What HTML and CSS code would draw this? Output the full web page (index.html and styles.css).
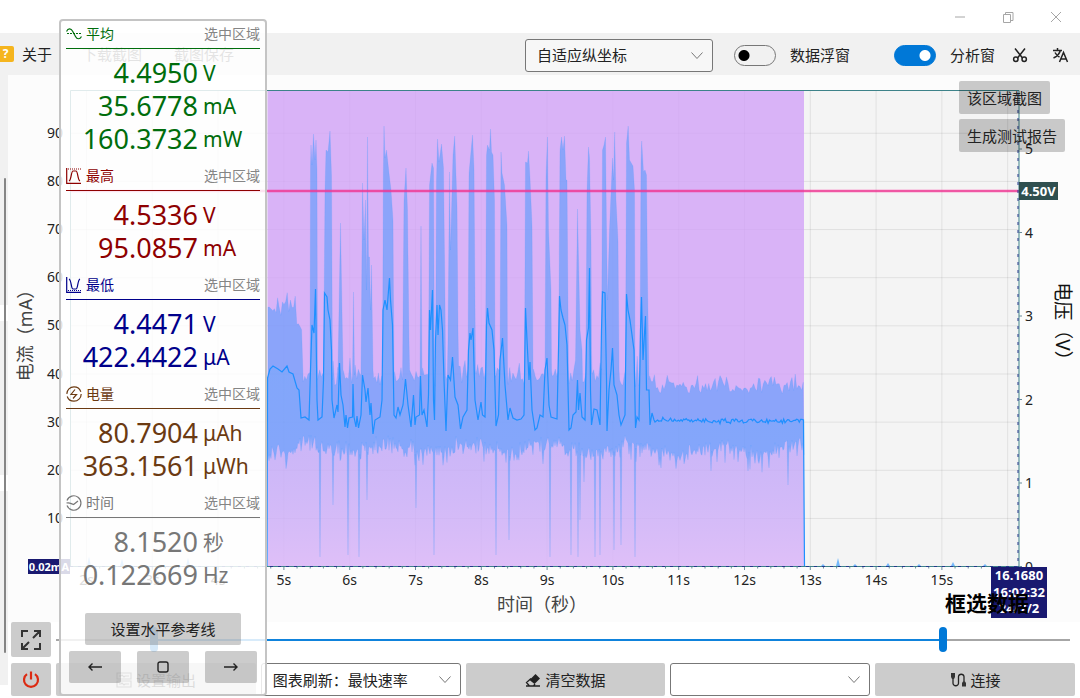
FILE: index.html
```html
<!DOCTYPE html>
<html lang="zh-CN">
<head>
<meta charset="utf-8">
<meta name="viewport" content="width=device-width, initial-scale=1">
<title>框选数据</title>
<link rel="stylesheet" href="styles.css">
</head>
<body>
<div class="app">
  <header class="titlebar">
    <button class="win-btn" aria-label="最小化"><svg width="12" height="12" viewBox="0 0 12 12"><path d="M1 6h10"/></svg></button>
    <button class="win-btn" aria-label="还原"><svg width="12" height="12" viewBox="0 0 12 12"><path d="M1.500 3.500h7v8h-7zM3.500 3.500v-2h7.500v8H8.500"/></svg></button>
    <button class="win-btn" aria-label="关闭"><svg width="12" height="12" viewBox="0 0 12 12"><path d="M1 1l10 10M11 1L1 11"/></svg></button>
  </header>

  <nav class="toolbar">
    <div class="menu">
      <span class="help-badge">?</span>
      <button class="menu-item">关于</button>
      <button class="menu-item menu-capture">下载截图</button>
      <button class="menu-item menu-save">截图保存</button>
    </div>
    <div class="tools">
      <div class="select-box select-axis">
        <select aria-label="纵坐标模式"><option>自适应纵坐标</option></select>
        <svg class="chevron" width="14" height="9" viewBox="0 0 14 9"><path d="M1.500 1.500L7 7.500l5.500-6"/></svg>
      </div>
      <label class="switch switch-data"><input type="checkbox"><span>数据浮窗</span></label>
      <label class="switch switch-analysis"><input type="checkbox" checked><span>分析窗</span></label>
      <button class="icon-btn icon-cut" aria-label="截取">
        <svg width="16" height="16" viewBox="0 0 16 16"><path d="M3 1.500l7.500 9.500M13 1.500L5.500 11"/><circle cx="3.800" cy="12.300" r="2.200"/><circle cx="12.200" cy="12.300" r="2.200"/></svg>
      </button>
      <button class="icon-btn" aria-label="语言">
        <svg width="17" height="16" viewBox="0 0 17 16"><path d="M1 3.500h9M5.500 1v2.500M8.300 3.500C7.500 7 5 9.500 1.500 11M3 5.500C4 7.500 5.500 9 7.500 10M7.500 15l4-9.500 4 9.500M9 12h5"/></svg>
      </button>
    </div>
  </nav>

  <main class="workspace">
    <aside class="side-rail"><div class="side-thumb"></div></aside>
    <div class="content">
      <section class="chart">
        <svg id="plot" class="plot" viewBox="8 75 1072 547" role="img" aria-label="电流与电压波形"></svg>
        <div class="chart-actions">
          <button class="btn chart-btn">该区域截图</button>
          <button class="btn chart-btn">生成测试报告</button>
        </div>
      </section>

      <footer class="controls">
        <button class="btn square" aria-label="全屏">
          <svg width="22" height="22" viewBox="0 0 22 22" class="stroke-icon"><path d="M2 8V2h6M20 14v6h-6M13 9l7-7M14 2h6v6M9 13l-7 7M2 14v6h6"/></svg>
        </button>
        <div class="range" style="--from:9.700%;--to:87.500%">
          <input type="range" min="0" max="1000" value="93" aria-label="起始时间">
          <input type="range" min="0" max="1000" value="878" aria-label="结束时间">
        </div>
        <button class="btn square power" aria-label="电源">
          <svg width="20" height="20" viewBox="0 0 20 20"><path d="M10 1.500v8M6 4.200a7 7 0 1 0 8 0"/></svg>
        </button>
        <div class="actions">
          <button class="btn">
            <svg width="16" height="16" viewBox="0 0 16 16" class="thin-icon"><path d="M1 1h14v6H1zM1 9h14v6H1zM3 4h2l1-1 2 2 1-1h4M3 12h2l1-1 2 2 1-1h4"/></svg>
            设置输出
          </button>
          <div class="select-box">
            <select aria-label="图表刷新"><option>图表刷新：最快速率</option></select>
            <svg class="chevron" width="14" height="9" viewBox="0 0 14 9"><path d="M1.500 1.500L7 7.500l5.500-6"/></svg>
          </div>
          <button class="btn">
            <svg width="16" height="16" viewBox="0 0 16 16"><path d="M6 6.500L10.500 2 15 6.500 9.500 12 4.500 8z" fill="#222"/><path d="M6 6.500l-4.500 4 3 3.500h4l1.500-2M1 14h14" fill="none" stroke="#222" stroke-width="1.300"/></svg>
            清空数据
          </button>
          <div class="select-box">
            <select aria-label="端口"><option></option></select>
            <svg class="chevron" width="14" height="9" viewBox="0 0 14 9"><path d="M1.500 1.500L7 7.500l5.500-6"/></svg>
          </div>
          <button class="btn">
            <svg width="17" height="16" viewBox="0 0 17 16"><path d="M3 6v5.500a2.800 2.800 0 0 0 5.500 0v-7a2.800 2.800 0 0 1 5.500 0V10" fill="none" stroke="#222" stroke-width="1.300"/><path d="M1 1h4v4L4 7H2L1 5zM13 9.500h2l1 1.500v3.500h-4V11z" fill="#333"/></svg>
            连接
          </button>
        </div>
      </footer>
    </div>
  </main>

  <section class="panel" aria-label="分析窗">
    <div class="stat stat-avg">
      <h2 class="stat-head">
        <svg width="16" height="14" viewBox="0 0 16 14"><path d="M.5 4.500C2 1 5 1 6.500 4l3 5.500c1.500 3 4.500 3 6 0"/><path d="M1 6.500h14" stroke-dasharray="2 1"/></svg>
        <span>平均</span><small>选中区域</small>
      </h2>
      <p class="value"><b>4.4950</b><i>V</i></p>
      <p class="value"><b>35.6778</b><i>mA</i></p>
      <p class="value"><b>160.3732</b><i>mW</i></p>
    </div>
    <div class="stat stat-max">
      <h2 class="stat-head">
        <svg width="16" height="16" viewBox="0 0 16 16"><path d="M.7 0v15.300H15M3 13C5.500 12 5 3 7 3h3c2 0 1.500 9 4 10"/><path d="M2 1h13" stroke-dasharray="1 1"/></svg>
        <span>最高</span><small>选中区域</small>
      </h2>
      <p class="value"><b>4.5336</b><i>V</i></p>
      <p class="value"><b>95.0857</b><i>mA</i></p>
    </div>
    <div class="stat stat-min">
      <h2 class="stat-head">
        <svg width="16" height="16" viewBox="0 0 16 16"><path d="M.7 0v15.300H15M3 2c2.500 1 2 10 4 10h3c2 0 1.500-9 4-10"/><path d="M2 13.500h13" stroke-dasharray="1 1"/></svg>
        <span>最低</span><small>选中区域</small>
      </h2>
      <p class="value"><b>4.4471</b><i>V</i></p>
      <p class="value"><b>422.4422</b><i>μA</i></p>
    </div>
    <div class="stat stat-charge">
      <h2 class="stat-head">
        <svg width="16" height="16" viewBox="0 0 16 16"><circle cx="8" cy="8" r="7.200" stroke-dasharray="20 2.600"/><path d="M9 3.500L5 8.500h5.500L7 12.500"/></svg>
        <span>电量</span><small>选中区域</small>
      </h2>
      <p class="value"><b>80.7904</b><i>μAh</i></p>
      <p class="value"><b>363.1561</b><i>μWh</i></p>
    </div>
    <div class="stat stat-time">
      <h2 class="stat-head">
        <svg width="16" height="16" viewBox="0 0 16 16"><path d="M1 5.500A7.200 7.200 0 1 1 1 10.500M.5 8C4 7 5 9 7.500 9.500L12 6"/></svg>
        <span>时间</span><small>选中区域</small>
      </h2>
      <p class="value"><b>8.1520</b><i>秒</i></p>
      <p class="value"><b>0.122669</b><i>Hz</i></p>
    </div>
    <button class="btn ref-line">设置水平参考线</button>
    <div class="nudge">
      <button class="btn" aria-label="左移"><svg width="14" height="10" viewBox="0 0 14 10"><path d="M14 5H1M4.500 1.500L1 5l3.500 3.500"/></svg></button>
      <button class="btn" aria-label="停止"><svg width="12" height="12" viewBox="0 0 12 12"><rect x="1" y="1" width="10" height="10" rx="2"/></svg></button>
      <button class="btn" aria-label="右移"><svg width="14" height="10" viewBox="0 0 14 10"><path d="M0 5h13M9.500 1.500L13 5 9.500 8.500"/></svg></button>
    </div>
  </section>
</div>
<script src="chart.js"></script>
</body>
</html>
```

FILE: styles.css
```css
* { box-sizing: border-box; }

body {
  margin: 0;
  background: #fff;
  color: #222;
  font: 15px/20px "Noto Sans", "Open Sans", "Noto Sans CJK SC", sans-serif;
}

button, select, input { font: inherit; color: inherit; margin: 0; }

button { border: 0; background: none; padding: 0; white-space: nowrap; }

.app { position: relative; min-height: 100vh; }

/* window title bar */
.titlebar {
  display: flex;
  justify-content: flex-end;
  height: 33px;
  padding-right: 18px;
  gap: 36px;
}
.win-btn { width: 12px; display: flex; align-items: center; }
.win-btn svg { fill: none; stroke: #a6a6a6; stroke-width: 1; }

/* toolbar */
.toolbar {
  display: flex;
  align-items: center;
  justify-content: space-between;
  height: 42px;
  background: #f1f1f1;
}
.menu, .tools { display: flex; align-items: center; }
.help-badge {
  width: 14px;
  height: 16px;
  border-radius: 0 2px 2px 0;
  background: #f5b51e;
  color: #fff;
  font: bold 12px/16px "Open Sans", sans-serif;
  text-align: center;
  padding-right: 3px;
}
.menu-item { margin-left: 8px; }
.menu-capture { margin-left: 30px; }
.menu-save { margin-left: 32px; }
.menu-capture, .menu-save { color: #555; }
.tools { padding: 2px 11px 0 0; }

.select-box { display: grid; align-items: center; height: 33px; }
.select-box select {
  grid-area: 1 / 1;
  width: 100%;
  height: 33px;
  padding: 0 32px 0 11px;
  border: 1px solid #777;
  border-radius: 3px;
  background: #fff;
  appearance: none;
}
.select-box .chevron {
  grid-area: 1 / 1;
  justify-self: end;
  margin-right: 9px;
  pointer-events: none;
  fill: none;
  stroke: #777;
}
.select-axis { width: 188px; margin-right: 21px; }
.select-axis select { background: #f7f7f7; }

.switch { display: flex; align-items: center; gap: 14px; }
.switch input {
  width: 42px;
  height: 21px;
  border: 1px solid #777;
  border-radius: 11px;
  background: radial-gradient(circle at 9px 50%, #000 5px, transparent 6px);
  appearance: none;
}
.switch input:checked {
  border-color: #0078d7;
  background: radial-gradient(circle at 30px 50%, #fff 5px, transparent 6px) #0078d7;
}
.switch-data { margin-right: 44px; }

.icon-btn { display: flex; }
.icon-btn svg { fill: none; stroke: #222; stroke-width: 1.5; }
.icon-cut { margin: 0 24px 0 17px; }

/* workspace */
.workspace { display: grid; grid-template-columns: 8px minmax(0, 1fr); }
.side-rail {
  background: linear-gradient(#f1f1f1 230px, #fff 230px 246px, #f1f1f1 246px 400px, #fff 400px 416px, #f1f1f1 416px 610px, #fff 610px);
  padding: 103px 2px 0 4px;
}
.side-thumb { height: 475px; border-radius: 1px; background: #858585; }

.chart { position: relative; background: #fcfcfc; }
.plot { display: block; width: 100%; }
.plot text { font-family: "Noto Sans", "Open Sans", "Noto Sans CJK SC", sans-serif; fill: #222; }
.plot .tick { font-size: 14px; }
.plot .axis-title { font-size: 18px; fill: #444; text-anchor: middle; }
.plot .axis-volt { font-size: 19px; fill: #111; }
.plot .tag { font-size: 13px; font-weight: bold; fill: #fff; text-anchor: middle; }
.plot .tag-small { font-size: 11px; }
.plot .caption { font-size: 21px; font-weight: bold; fill: #000; }
.plot .grid { stroke: #000; stroke-opacity: .08; }
.plot .select-area { fill: #d2a3f8; fill-opacity: .8; }
.plot .envelope { fill: #1e90ff; fill-opacity: .41; stroke: #1e90ff; stroke-opacity: .12; }
.plot .mean { fill: none; stroke: #1e90ff; stroke-width: 1.2; }
.plot .volt-glow { stroke: #ff1493; stroke-opacity: .35; stroke-width: 3; }
.plot .volt { stroke: #ec3c93; stroke-width: 1.6; }
.plot .frame { stroke: #3d8289; fill: none; }
.plot .dash { stroke: #26388c; stroke-dasharray: 3 5; }
.plot .minor { stroke: #6a8d9b; }

.chart-actions {
  position: absolute;
  top: 6px;
  right: 15px;
  width: 106px;
  display: flex;
  flex-direction: column;
  align-items: flex-start;
  gap: 5px;
}

.btn {
  display: flex;
  align-items: center;
  justify-content: center;
  gap: 4px;
  height: 33px;
  border-radius: 2px;
  background: #ccc;
}
.chart-btn { padding: 0 8px; background: rgba(0, 0, 0, .2); }

/* bottom controls */
.controls {
  display: grid;
  grid-template-columns: 40px minmax(0, 1fr);
  grid-template-rows: 35px 33px;
  gap: 6px 5px;
  padding: 0 5px 2px 3px;
  background: #fff;
}
.square { height: auto; }
.stroke-icon { fill: none; stroke: #333; stroke-width: 2; }
.power svg { fill: none; stroke: #dc2a12; stroke-width: 2.2; }
.actions {
  display: grid;
  grid-template-columns: repeat(5, minmax(0, 1fr));
  gap: 5px;
}
.thin-icon { fill: none; stroke: #444; stroke-width: 1.2; }

.range {
  display: grid;
  align-items: center;
  margin-right: 5px;
  background: linear-gradient(90deg, #a6a6a6 var(--from), #0f83dc var(--from) var(--to), #a6a6a6 var(--to)) center / 100% 2px no-repeat;
}
.range input {
  grid-area: 1 / 1;
  width: 100%;
  height: 25px;
  background: none;
  appearance: none;
  pointer-events: none;
}
.range input::-webkit-slider-thumb {
  width: 8px;
  height: 25px;
  border-radius: 4px;
  background: #0078d7;
  appearance: none;
  pointer-events: auto;
}

/* floating analysis panel */
.panel {
  position: absolute;
  top: 19px;
  left: 59px;
  width: 208px;
  padding: 0 5px 11px;
  border: 2px solid #c4c4c4;
  border-radius: 4px;
  background: rgba(255, 255, 255, .84);
}
.stat { padding-bottom: 8px; }
.stat-head {
  display: flex;
  align-items: center;
  gap: 4px;
  height: 28px;
  margin: 0 0 7px;
  padding-bottom: 1px;
  border-bottom: 1px solid;
  font-size: 14px;
  font-weight: normal;
}
.stat-head svg { fill: none; stroke: currentColor; stroke-width: 1.2; }
.stat-head small { margin-left: auto; font-size: 14px; color: #858585; }
.value {
  display: grid;
  grid-template-columns: 132px 1fr;
  align-items: center;
  gap: 5px;
  height: 33px;
  margin: 0;
}
.value b { font-size: 27px; font-weight: normal; text-align: right; }
.value i { font-size: 21px; font-style: normal; white-space: nowrap; }
.stat-avg { color: #006d0c; }
.stat-max { color: #8e0000; }
.stat-min { color: #00008b; }
.stat-charge { color: #6b3a12; }
.stat-time { color: #777; }
.panel .btn { height: 32px; background: rgba(100, 100, 100, .33); }
.panel .ref-line { width: 156px; margin: 14px auto 6px; }
.nudge { display: flex; justify-content: space-between; padding: 0 3px; }
.nudge .btn { width: 52px; }
.nudge svg { fill: none; stroke: #222; stroke-width: 1.4; }
```

FILE: chart.js
```js
(function () {
  var svg = document.getElementById('plot');
  var LEFT = 70, RIGHT = 1019, TOP = 90, BOTTOM = 567;

  // repeatable pseudo-random source for the sampling noise
  var seed = 7;
  function rnd() {
    seed = (seed * 16807) % 2147483647;
    return seed / 2147483647;
  }
  function noise(a) { return (rnd() + rnd() - 1) * a; }

  var out = ['<defs><linearGradient id="fade" gradientUnits="userSpaceOnUse" x1="0" y1="290" x2="0" y2="567">' +
    '<stop offset="0" stop-color="#3cdcff" stop-opacity=".12"/><stop offset=".6" stop-color="#5cd8ff" stop-opacity=".1"/>' +
    '<stop offset="1" stop-color="#fff" stop-opacity=".16"/></linearGradient></defs>'];
  function line(cls, x1, y1, x2, y2) {
    out.push('<line class="' + cls + '" x1="' + x1 + '" y1="' + y1 + '" x2="' + x2 + '" y2="' + y2 + '"/>');
  }
  function text(cls, x, y, s, extra) {
    out.push('<text class="' + cls + '" x="' + x + '" y="' + y + '" ' + (extra || '') + '>' + s + '</text>');
  }
  function rect(x, y, w, h, attrs) {
    out.push('<rect x="' + x + '" y="' + y + '" width="' + w + '" height="' + h + '" ' + attrs + '/>');
  }
  function points(list) { return list.map(function (p) { return p[0].toFixed(1) + ',' + p[1].toFixed(1); }).join(' '); }
  function pairs(flat) {
    var r = [];
    for (var k = 0; k < flat.length; k += 2) r.push([flat[k], flat[k + 1]]);
    return r;
  }

  // bursts of the maximum current: x, y pairs of each burst outline
  var bursts = [
    [310, 380, 310.5, 165, 311, 145, 312, 165, 313.5, 134, 315, 160, 316, 140, 317, 170, 317.5, 380],
    [323.5, 380, 325, 190, 326, 150, 328, 152, 330, 131, 331.5, 175, 332.5, 380],
    [338, 370, 340.5, 223, 343, 370],
    [352.5, 375, 353.5, 292, 354.5, 375],
    [361, 375, 362.5, 183, 364, 240, 365.5, 200, 366.5, 290, 367.5, 137, 368.5, 257, 369.5, 257, 370.5, 310, 371.5, 265, 373, 370],
    [382.5, 385, 383.3, 175, 384, 126, 385, 158, 386.5, 150, 389, 173, 391, 190, 393, 220, 394, 380],
    [402.5, 380, 404, 200, 406, 168, 407.5, 210, 409, 340],
    [420, 375, 421, 226, 422, 375],
    [428.5, 375, 429.5, 185, 432, 163, 433.5, 168, 434.5, 378],
    [435.5, 378, 436.5, 180, 437.5, 139, 439, 162, 441.5, 144, 443.5, 168, 445, 300],
    [448, 340, 449.5, 172, 450.5, 250, 453, 155, 454.7, 136, 457, 205, 458, 330],
    [468, 370, 469, 173, 472.5, 135, 474, 168, 475.5, 370],
    [485.5, 370, 486.5, 155, 487.5, 145, 489.5, 150, 490.5, 129, 491.5, 152, 493, 155, 494.5, 200, 495, 375],
    [500, 370, 501, 152, 502, 173, 504.5, 185, 507, 225, 507.5, 370],
    [524.5, 370, 525.5, 162, 527.5, 163, 528.5, 151, 530, 178, 532, 225, 533, 370],
    [545, 370, 546, 175, 547.5, 137, 548.5, 230, 551, 290, 551.5, 370],
    [558.5, 370, 560, 150, 561.5, 137, 563, 150, 564.5, 136, 566, 180, 567, 180, 568.5, 370],
    [575.5, 360, 577.5, 209, 580, 330, 582, 350],
    [586, 350, 587, 190, 588.5, 147, 589.5, 158, 591, 240, 591.5, 350],
    [601.5, 370, 602.5, 150, 604, 145, 605.5, 137, 606.5, 230, 607.5, 300, 609.5, 230, 612.5, 158, 613.5, 180, 614.7, 132, 616, 200, 618, 240, 619, 370],
    [625.5, 370, 626.5, 143, 628.2, 126, 629.5, 160, 633, 166, 634.5, 190, 635, 370],
    [640, 370, 641, 160, 641.7, 141, 643.5, 172, 645, 170, 646.5, 175, 647.5, 280, 649, 380]
  ];
  var upper = [], x = 268;
  function upperBase(to) {
    for (; x < to; x += 1.6) {
      var level = x < 296 ? 308 : x < 302 ? 328 : x < 649 ? 376 : 385;
      upper.push([x, level + noise(12) - (rnd() > .9 ? 12 : 0)]);
    }
  }
  bursts.forEach(function (b) {
    upperBase(b[0]);
    upper = upper.concat(pairs(b));
    x = b[b.length - 2] + .6;
  });
  upperBase(804);

  // minimum current with its short drop-outs
  var drops = { 320: 557, 333: 505, 348: 555, 359: 557, 367: 500, 416: 508, 434: 555, 496: 555, 509: 540, 550: 557,
    571: 555, 578: 557, 580: 520, 584: 482, 595: 557, 600: 555, 614: 550, 621: 545, 635: 557, 711: 471, 748: 471, 788: 485 };
  var lower = [];
  for (var lx = 268; lx <= 804; lx++) {
    var base = (lx < 300 || lx > 649 ? 451 : 448) + Math.sin(lx / 13) * 4;
    if (drops[lx]) {
      lower.push([lx - .8, base + 4], [lx, drops[lx]], [lx + .8, base + 4]);
    } else {
      lower.push([lx, base + noise(11) + (rnd() > .92 ? 10 : 0)]);
    }
  }

  var mean = pairs([
    267, 567, 267.5, 378, 270, 369, 273, 366, 278, 369, 282, 372, 287, 366, 289, 372, 293, 374, 297, 388, 299, 390, 301, 418,
    305, 417, 309, 420, 310.5, 370, 312, 325, 314, 333, 315.5, 289, 317, 400, 318, 420, 322, 417, 323.5, 380, 324.5, 293,
    327, 297, 328, 310, 330, 320, 331.5, 350, 332, 400, 334, 418, 337, 405, 338, 412, 339.5, 363, 341, 395, 343, 405,
    345, 427, 346, 415, 347.5, 428, 349, 418, 352.5, 417, 353, 384, 354, 417, 356, 427, 357, 416, 358.5, 428, 361, 415,
    362.5, 375, 365, 390, 366, 402, 368, 388, 370, 415, 371, 403, 373, 434, 375, 420, 380, 417, 382, 400, 383, 310, 385, 300,
    387, 310, 389.5, 278, 390.5, 300, 392.5, 325, 394, 415, 396, 418, 398, 407, 400, 415, 403, 405, 405.5, 379, 408, 405,
    411, 427, 413.5, 395, 415, 425, 416, 417, 419.5, 415, 420.5, 376, 422, 415, 424, 410, 427, 427, 428.5, 395, 429.5, 310,
    430.5, 330, 432.5, 290, 433.5, 400, 434.5, 420, 435.5, 340, 437, 305, 438, 335, 439.5, 305, 441, 310, 442.5, 330,
    444, 380, 446, 431, 448, 375, 450.5, 380, 452.5, 357, 455, 397, 458, 405, 460.5, 429, 463, 417, 467, 410, 468.5, 350,
    470, 333, 471, 340, 473, 328, 475, 400, 478, 420, 481, 402, 482.5, 415, 485, 417, 486.5, 325, 487.5, 308, 489, 323,
    492, 330, 494, 350, 496, 426, 498.5, 415, 500, 360, 502.5, 338, 505, 385, 508, 420, 510, 408, 513, 418, 517, 420,
    521, 419, 524, 415, 525.5, 308, 527, 340, 529, 380, 530, 362, 532, 410, 535, 430, 537, 428, 540, 415, 543, 417,
    545, 370, 547, 358, 549, 405, 551, 417, 557, 419, 558.5, 350, 559.5, 296, 561, 310, 563, 318, 565, 325, 567, 345,
    569, 430, 571, 428, 573, 415, 576, 412, 577.5, 380, 578.5, 410, 580, 393, 582, 417, 585, 420, 586.5, 340, 588.5, 328,
    589.5, 268, 590.5, 390, 591.5, 425, 594, 409, 597, 410, 600, 425, 601.5, 330, 602.5, 292, 605, 293, 606.5, 380,
    607, 431, 609, 390, 611, 370, 612.5, 348, 614, 385, 617, 395, 619, 415, 621, 425, 625, 415, 626.5, 294, 628, 310,
    630, 320, 632, 335, 634, 350, 635.5, 428, 637, 417, 639, 420, 640.5, 330, 641.5, 297, 643, 360, 645.5, 316,
    646.5, 390, 649, 390, 650, 425, 652, 413, 654, 420]);
  for (var mx = 655; mx < 803; mx += 1.3) mean.push([mx, 420.5 + noise(3.5)]);
  mean.push([803.5, 420], [804.5, 566]);

  // plot surface, selection and waveforms
  rect(LEFT, TOP, RIGHT - LEFT, BOTTOM - TOP, 'fill="#f4f4f4"');
  for (var s = 2; s <= 16; s++) line('grid', 86.5 + (s - 2) * 65.8, TOP, 86.5 + (s - 2) * 65.8, BOTTOM);
  for (var v = 1; v < 10; v++) line('grid', LEFT, 566.6 - v * 48.15, RIGHT, 566.6 - v * 48.15);
  rect(267.5, TOP, 536.5, BOTTOM - TOP, 'class="select-area"');
  out.push('<polygon fill="url(#fade)" points="' + points(mean) + '"/>');
  out.push('<polygon class="envelope" points="' + points(upper.concat(lower.slice().reverse())) + '"/>');
  out.push('<polyline class="mean" points="' + points(mean) + '"/>');
  line('volt-glow', LEFT, 191, RIGHT, 191);
  line('volt', LEFT, 191, RIGHT, 191);

  // idle current along the baseline
  [[89, 9], [122, 7], [188, 8], [823, 2], [838, 8], [855, 2], [888, 3], [919, 2], [953, 4], [985, 2]].forEach(function (p) {
    out.push('<polygon fill="#1e90ff" fill-opacity=".6" points="' + points([[p[0] - 2, 566], [p[0], 566 - p[1]], [p[0] + 2, 566]]) + '"/>');
  });
  out.push('<path class="frame" d="M70.500 567V90.500H1019v476H70.500"/>');
  line('dash', RIGHT - 1, TOP + 4, RIGHT - 1, BOTTOM);
  line('dash', LEFT, BOTTOM - .5, RIGHT, BOTTOM - .5);

  // scales
  for (s = 2; s <= 15; s++) {
    var tx = 86.5 + (s - 2) * 65.8;
    line('minor', tx, BOTTOM, tx, BOTTOM + 3);
    text('tick', tx, 585, s + 's', 'text-anchor="middle"');
    for (var q = 1; q < 5; q++) line('minor', tx + q * 13.16, BOTTOM, tx + q * 13.16, BOTTOM + 1.5);
  }
  for (v = 1; v < 10; v++) text('tick', 63, 570.6 - v * 48.15 + .5, v * 10, 'text-anchor="end"');
  for (v = 0; v <= 5; v++) {
    line('minor', RIGHT, 566.5 - v * 83.5, RIGHT + 3, 566.5 - v * 83.5);
    text('tick', 1025, 571.5 - v * 83.5, v);
  }
  text('axis-title', 542, 611, '时间（秒）');
  text('axis-title', 0, 0, '电流（mA）', 'transform="translate(32 331) rotate(-90)"');
  text('axis-title axis-volt', 0, 0, '电压（V）', 'transform="translate(1056 326) rotate(90)"');

  // value tags
  rect(28, 559, 42, 15, 'fill="#191970"');
  text('tag tag-small', 49, 570.5, '0.02mA');
  rect(RIGHT, 182, 39, 18, 'fill="#2f4f4f"');
  text('tag', 1038.5, 195.5, '4.50V');
  rect(991, 567, 56, 51, 'fill="#191970"');
  text('tag', 1019, 580, '16.1680');
  text('tag', 1019, 597, '16:02:32');
  text('tag', 1019, 613, '24/7/2');
  text('caption', 945, 611, '框选数据');

  svg.innerHTML = out.join('');
})();
```
